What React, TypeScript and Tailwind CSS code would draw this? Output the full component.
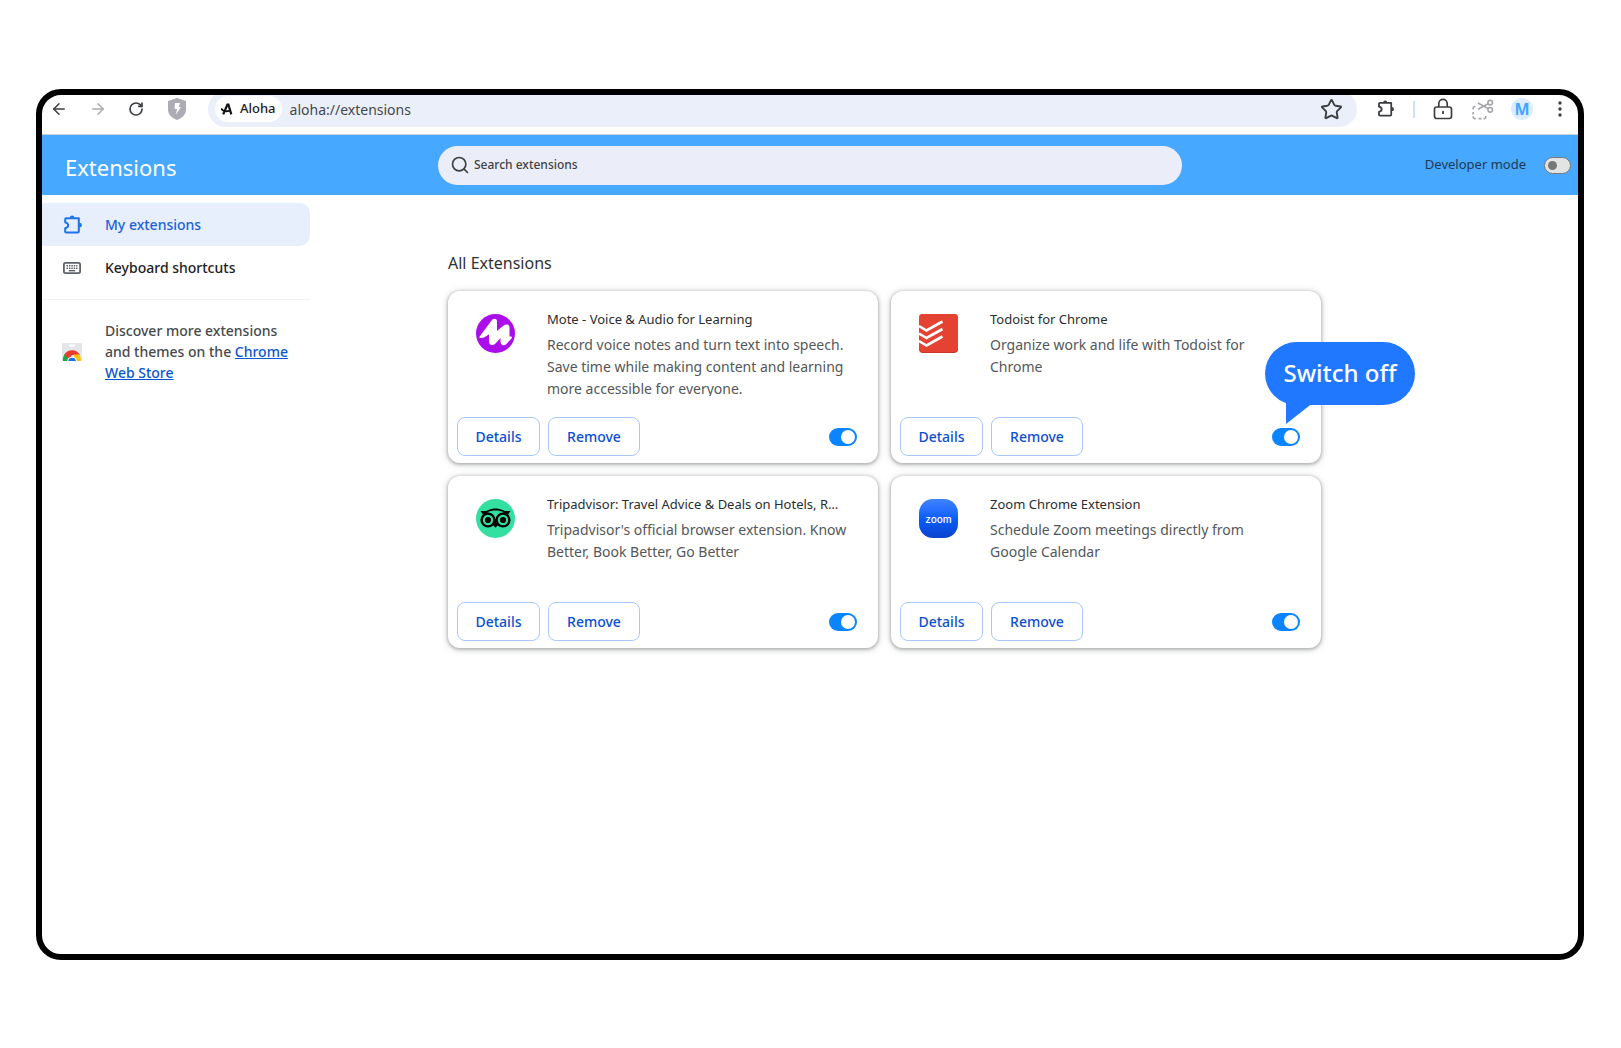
import React, { useState } from "react";
import { ArrowLeft, ArrowRight, RotateCw, Search, Star } from "lucide-react";

interface Extension {
  id: string;
  name: string;
  description: string;
  icon: React.ReactNode;
  hint?: string;
}

const PuzzleIcon = ({ className }: { className?: string }) => (
  <svg viewBox="0 0 20 20" className={className} fill="none" aria-hidden="true">
    <path
      d="M3.2 3.2h12.6v13.2a1 1 0 0 1-1 1H3.2a1 1 0 0 1-1-1v-3.2c2.2-.6 3-1.6 3-2.9s-.8-2.3-3-2.9V4.2a1 1 0 0 1 1-1z"
      stroke="currentColor"
      strokeWidth="2"
      strokeLinejoin="round"
    />
    <path d="M6.8 2.8a2.3 2.3 0 0 1 4.6 0z" fill="currentColor" />
    <path d="M16.4 7.8a2.4 2.4 0 0 1 0 4.8z" fill="currentColor" />
  </svg>
);

const KeyboardIcon = () => (
  <svg viewBox="0 0 18 12" className="w-[18px] h-3" fill="none" aria-hidden="true">
    <rect x="0.9" y="0.9" width="16.2" height="10.2" rx="1.6" stroke="#5f6368" strokeWidth="1.8" />
    <path d="M3.5 3.8h11M3.5 6.2h11" stroke="#5f6368" strokeWidth="1.5" strokeDasharray="1.5 0.9" />
    <path d="M5.8 8.7h6.4" stroke="#5f6368" strokeWidth="1.4" />
  </svg>
);

const WebStoreIcon = () => (
  <svg viewBox="0 0 20 18" className="w-5 h-[18px]" aria-hidden="true">
    <path d="M0 0h20v17a1 1 0 0 1-1 1H1a1 1 0 0 1-1-1z" fill="#e4e6ea" />
    <rect x="7" y="1.5" width="6" height="2" rx="1" fill="#fff" />
    <path d="M1 18a9.2 9.2 0 0 1 2.6-7.8L7 15l-.5 3z" fill="#1ea446" />
    <path d="M2.3 11.8C4 8.6 7 7.2 10.2 7.2c3.5 0 6.2 1.8 7.6 4.8H10L7 16z" fill="#ea3a2c" />
    <path d="M12 11.6h5.6c1 1.8 1.4 4 1.2 6.4H12z" fill="#fcc211" />
    <path d="M5.2 18a4.9 4.9 0 0 1 9.7 0z" fill="#fff" />
    <path d="M6.2 18a3.9 3.9 0 0 1 7.7 0z" fill="#1a6fe8" />
  </svg>
);

const ShieldIcon = () => (
  <svg viewBox="0 0 18 22" className="w-[18px] h-[22px]" aria-hidden="true">
    <path d="M9 0l9 3v8.5c0 5-4 8.8-9 10.5-5-1.7-9-5.500-9-10.5V3z" fill="#acacb4" />
    <path d="M7 5h5l-1.2 4H13l-5 7.500 1-5.500H6.500z" fill="#fff" />
  </svg>
);

const AlohaIcon = () => (
  <svg viewBox="0 0 12 12" className="w-3 h-3" fill="none" stroke="#111" aria-hidden="true">
    <path d="M2.2 11.4L6.4 1.5h1L10.3 11.4" strokeWidth="2.2" />
    <path d="M0 5.6c2 3.2 5 3.2 9 2" strokeWidth="1.8" />
  </svg>
);

const LockIcon = () => (
  <svg viewBox="0 0 20 22" className="w-5 h-[22px]" fill="none" stroke="#3c3f42" aria-hidden="true">
    <rect x="1.5" y="9" width="17" height="11.5" rx="2.2" strokeWidth="1.7" />
    <path d="M5.8 9V5.500a4.2 4.2 0 0 1 8.4 0V9" strokeWidth="1.7" />
    <path d="M10 13v3" strokeWidth="1.8" />
  </svg>
);

const SnipIcon = () => (
  <svg viewBox="0 0 22 21" className="w-[22px] h-[21px]" fill="none" stroke="#a3a5a8" strokeWidth="1.6" aria-hidden="true">
    <circle cx="18.2" cy="3.6" r="2.3" />
    <circle cx="18.2" cy="10.8" r="2.3" />
    <path d="M16.2 4.8L6 10.2M16.2 9.6L6 4" />
    <path d="M3.5 7.5H2.8a1.6 1.6 0 0 0-1.6 1.6v1.4M1.2 13v2.5M1.2 17.2v.8a1.6 1.6 0 0 0 1.6 1.6h1M6.5 19.6h3M11.5 19.6h.7a1.6 1.6 0 0 0 1.6-1.6v-1" />
  </svg>
);

const MenuDotsIcon = () => (
  <svg viewBox="0 0 4 16" className="w-1 h-4" fill="#3c3f42" aria-hidden="true">
    <circle cx="2" cy="2" r="1.7" />
    <circle cx="2" cy="8" r="1.7" />
    <circle cx="2" cy="14" r="1.7" />
  </svg>
);

const MoteIcon = () => (
  <svg viewBox="0 0 39 39" className="size-full" aria-hidden="true">
    <circle cx="19.5" cy="19.5" r="19.5" fill="#ab0ee8" />
    <path
      d="M4.5 23L16 7.5c1.500-2.500 4-2.500 4 0V19l8-6.500c2.500-2 4.500-1 4.500 1V23.500l2.500 0-5.500 6c-2 1.500-4 .5-4-1.500V21.500L18.500 29c-2 2-4.500 1-4.500-1.500V18.500l-6 4z"
      fill="#fff"
      stroke="#fff"
      strokeWidth="2"
      strokeLinejoin="round"
    />
  </svg>
);

const TodoistIcon = () => (
  <svg viewBox="0 0 39 39" className="size-full" aria-hidden="true">
    <rect width="39" height="39" rx="4" fill="#c9372b" />
    <rect width="39" height="38" rx="4" fill="#e44232" />
    <path
      d="M0 12l7.500 4.500L23.500 7.500M0 19.500l7.500 4.500 16-9M0 27l7.500 4.500 16-9"
      fill="none"
      stroke="#fff"
      strokeWidth="2.6"
    />
  </svg>
);

const TripadvisorIcon = () => (
  <svg viewBox="0 0 39 39" className="size-full" aria-hidden="true">
    <circle cx="19.5" cy="19.5" r="19.5" fill="#34e0a1" />
    <path d="M4.5 12h5.600c5.800-3.400 13-3.400 18.800 0h5.600l-2.500 3.600-12.500 13.200L7 15.600z" fill="#000" />
    <path d="M11 13.500c5-2.600 12-2.600 17 0-4 .8-7 3-8.500 7.500-1.500-4.500-4.500-6.700-8.500-7.500z" fill="#34e0a1" />
    <circle cx="12" cy="21" r="7.6" fill="#000" />
    <circle cx="27" cy="21" r="7.6" fill="#000" />
    <circle cx="12" cy="21" r="5.2" fill="#34e0a1" />
    <circle cx="27" cy="21" r="5.2" fill="#34e0a1" />
    <circle cx="12" cy="21" r="3.1" fill="#000" />
    <circle cx="27" cy="21" r="3.1" fill="#000" />
  </svg>
);

const ZoomIcon = () => (
  <div className="flex size-full items-center justify-center rounded-[14px] bg-linear-to-t from-[#0a44cc] via-[#0b5cff] to-[#3f83ff]">
    <span className="font-['Inter',sans-serif] text-[10px] leading-3 font-medium text-white">zoom</span>
  </div>
);

const extensions: Extension[] = [
  {
    id: "mote",
    name: "Mote - Voice & Audio for Learning",
    description:
      "Record voice notes and turn text into speech. Save time while making content and learning more accessible for everyone.",
    icon: <MoteIcon />,
  },
  {
    id: "todoist",
    name: "Todoist for Chrome",
    description: "Organize work and life with Todoist for Chrome",
    icon: <TodoistIcon />,
    hint: "Switch off",
  },
  {
    id: "tripadvisor",
    name: "Tripadvisor: Travel Advice & Deals on Hotels, Restaurants",
    description: "Tripadvisor's official browser extension. Know Better, Book Better, Go Better",
    icon: <TripadvisorIcon />,
  },
  {
    id: "zoom",
    name: "Zoom Chrome Extension",
    description: "Schedule Zoom meetings directly from Google Calendar",
    icon: <ZoomIcon />,
  },
];

const BrowserBar = () => (
  <div className="flex h-10 items-start border-b border-[#c9d3dc] pr-4 pl-2">
    <div className="flex h-7 items-center">
      <button aria-label="Back" className="w-5">
        <ArrowLeft className="h-[18px] w-[18px] text-[#3c3f42]" />
      </button>
      <button aria-label="Forward" className="ml-[19px] w-5">
        <ArrowRight className="h-[18px] w-[18px] text-[#a8aaad]" />
      </button>
      <button aria-label="Reload" className="ml-[19px] w-5">
        <RotateCw className="h-4 w-4 text-[#3c3f42]" strokeWidth={2.5} />
      </button>
      <button aria-label="Shield" className="ml-5">
        <ShieldIcon />
      </button>
    </div>
    <div className="-mt-1 ml-[22px] flex h-9 flex-1 items-center rounded-full bg-[#ebeff9] pr-[14px] pl-[7px]">
      <button className="flex h-[26px] items-center gap-[7px] rounded-full bg-white px-[6px] text-[13px] font-medium text-[#1f2023]">
        <AlohaIcon />
        Aloha
      </button>
      <input
        type="text"
        aria-label="Address"
        defaultValue="aloha://extensions"
        className="ml-2 min-w-0 flex-1 bg-transparent text-[14px] text-[#45484c] outline-none"
      />
      <button aria-label="Bookmark">
        <Star className="h-[23px] w-[23px] text-[#3c3f42]" />
      </button>
    </div>
    <div className="flex h-7 items-center pl-5">
      <button aria-label="Extensions">
        <PuzzleIcon className="h-[18px] w-[18px] text-[#3c3f42]" />
      </button>
      <span className="ml-[18px] h-[17px] w-[2px] bg-[#cfe0fb]" />
      <button aria-label="Passwords" className="ml-[18px]">
        <LockIcon />
      </button>
      <button aria-label="Screenshot" className="ml-[19px]">
        <SnipIcon />
      </button>
      <button
        aria-label="Profile"
        className="ml-[17px] h-[22px] w-[22px] rounded-full bg-[#dcecff] text-[16px] leading-[22px] font-bold text-[#45a6ff]"
      >
        M
      </button>
      <button aria-label="Menu" className="ml-[25px]">
        <MenuDotsIcon />
      </button>
    </div>
  </div>
);

const PageHeader = () => {
  const [devMode, setDevMode] = useState(false);

  return (
    <header className="flex h-[60px] items-center bg-[#46a8ff] pr-[7px] pl-[23px]">
      <h1 className="flex-1 pt-1 text-[22px] leading-8 text-white">Extensions</h1>
      <div className="flex h-[39px] w-full max-w-[744px] items-center gap-1 rounded-full bg-[#ebeef8] px-3">
        <Search className="h-5 w-5 text-[#3c3f42]" />
        <input
          type="text"
          aria-label="Search extensions"
          placeholder="Search extensions"
          className="min-w-0 flex-1 bg-transparent text-[12px] font-medium outline-none placeholder:text-[#3f4246]"
        />
      </div>
      <div className="flex flex-1 items-center justify-end gap-[18px] pl-4">
        <label htmlFor="dev-mode" className="text-[13px] text-[#1e3a57]">
          Developer mode
        </label>
        <input
          id="dev-mode"
          type="checkbox"
          checked={devMode}
          onChange={(e) => setDevMode(e.target.checked)}
          className="flex h-[17px] w-[27px] appearance-none items-center rounded-full border border-[#777] bg-[#e1e4e3] px-[3px] before:h-[9px] before:w-[9px] before:rounded-full before:bg-[#777] checked:justify-end"
        />
      </div>
    </header>
  );
};

const Sidebar = () => (
  <aside className="w-[268px] shrink-0 pt-2">
    <nav className="border-b border-[#f1f2f3] pb-[10px] text-[14px] font-medium">
      <a href="#extensions" className="flex h-[43px] items-center rounded-r-[10px] bg-[#e7effd] pl-[21px] text-[#1b62d8]">
        <span className="w-[42px]">
          <PuzzleIcon className="h-5 w-5 text-[#1a73e8]" />
        </span>
        My extensions
      </a>
      <a href="#shortcuts" className="flex h-[43px] items-center pl-[21px] text-[#1f2023]">
        <span className="w-[42px]">
          <KeyboardIcon />
        </span>
        Keyboard shortcuts
      </a>
    </nav>
    <div className="flex items-center pt-5 pl-5 text-[14px] leading-[21px] font-medium text-[#474a4d]">
      <span className="w-[43px] shrink-0">
        <WebStoreIcon />
      </span>
      <p className="w-[200px]">
        Discover more extensions and themes on the{" "}
        <a href="#store" className="text-[#0b57d0] underline">
          Chrome Web Store
        </a>
      </p>
    </div>
  </aside>
);

const ExtensionCard: React.FC<{ data: Extension }> = ({ data }) => {
  const [enabled, setEnabled] = useState(true);

  return (
    <article className="flex h-[172px] flex-col justify-between rounded-xl bg-white pt-[17px] pb-[7px] shadow-[0_1px_3px_1px_rgba(60,64,67,0.3),0_1px_6px_2px_rgba(60,64,67,0.12)]">
      <div className="flex px-7">
        <div className="mt-[6px] h-[39px] w-[39px] shrink-0">{data.icon}</div>
        <div className="ml-8 min-w-0 flex-1">
          <h3 className="mr-2 truncate text-[13px] leading-[22px] text-[#2a2d30]">{data.name}</h3>
          <p className="mt-1 h-[62px] overflow-hidden text-[14px] leading-[22px] text-[#54575a]">
            {data.description}
          </p>
        </div>
      </div>
      <div className="flex items-center gap-2 pr-[21px] pl-[9px] text-[14px] font-medium text-[#0b50d0]">
        <button className="h-[39px] w-[83px] rounded-lg border border-[#a8c7fa]">Details</button>
        <button className="h-[39px] w-[92px] rounded-lg border border-[#a8c7fa]">Remove</button>
        <div className="relative ml-auto flex">
          <input
            type="checkbox"
            aria-label={`Enable ${data.name}`}
            checked={enabled}
            onChange={(e) => setEnabled(e.target.checked)}
            className="flex h-[18px] w-7 appearance-none items-center rounded-full bg-gray-400 px-[2px] before:h-[14px] before:w-[14px] before:rounded-full before:bg-white checked:justify-end checked:bg-[#0a84ff]"
          />
          {data.hint && (
            <div
              role="tooltip"
              className="absolute bottom-[41px] left-[-7px] flex h-[63px] w-[150px] items-center justify-center rounded-full bg-[#1f78ff] text-[24px] whitespace-nowrap text-white"
            >
              {data.hint}
              <svg viewBox="0 0 28 32" className="absolute top-[50px] left-[21px] h-8 w-7" aria-hidden="true">
                <path d="M0 0h28v10L0 32z" fill="#1f78ff" />
              </svg>
            </div>
          )}
        </div>
      </div>
    </article>
  );
};

const App: React.FC = () => {
  return (
    <div className="flex min-h-screen bg-white pt-[89px] pr-[37px] pb-[88px] pl-9 font-['Noto_Sans','Open_Sans',sans-serif]">
      <div className="flex min-w-0 flex-1 flex-col overflow-hidden rounded-[25px] border-[6px] border-black bg-white">
        <BrowserBar />
        <PageHeader />
        <div className="flex flex-1">
          <Sidebar />
          <main className="min-w-0 flex-1 pt-14 pr-6 pl-[138px]">
            <h2 className="text-[16px] leading-6 text-[#2f3235]">All Extensions</h2>
            <div className="mt-4 grid max-w-[873px] grid-cols-2 gap-[13px]">
              {extensions.map((extension) => (
                <ExtensionCard key={extension.id} data={extension} />
              ))}
            </div>
          </main>
        </div>
      </div>
    </div>
  );
};

export default App;
